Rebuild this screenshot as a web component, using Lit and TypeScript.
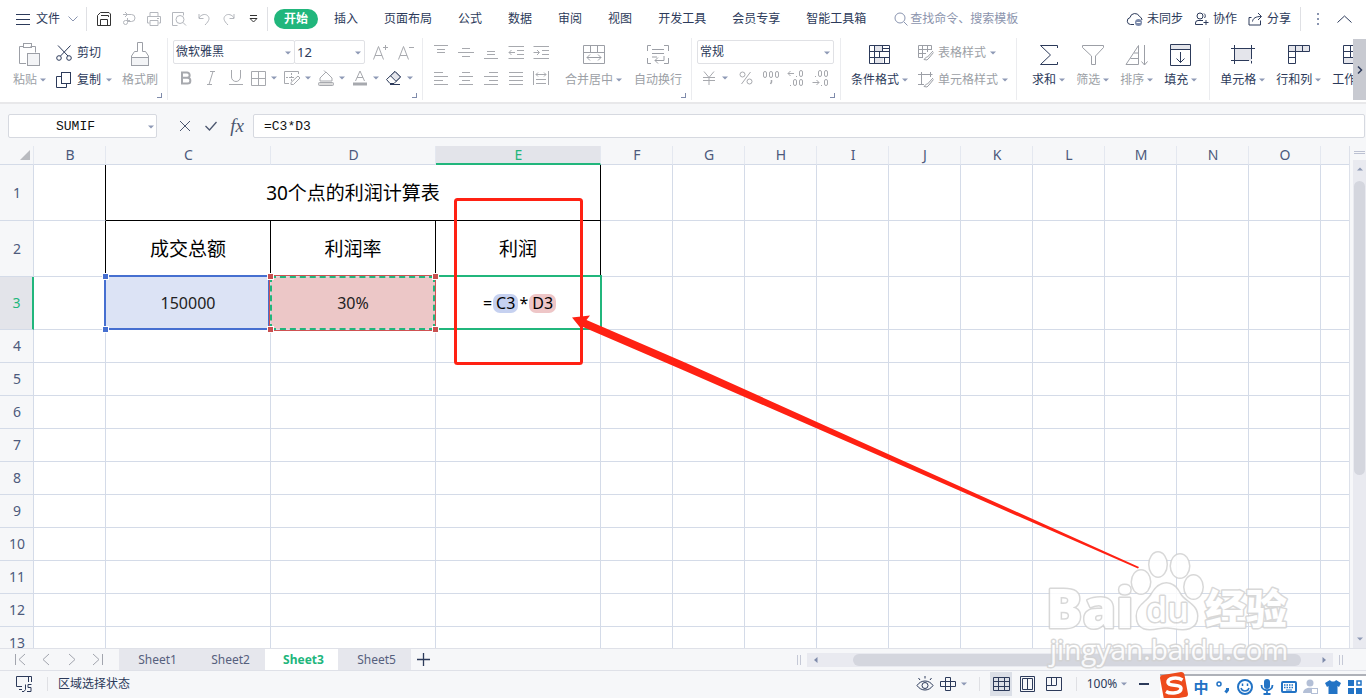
import { LitElement, html, css, svg, nothing } from "lit";
import type { TemplateResult, SVGTemplateResult } from "lit";
import { customElement } from "lit/decorators.js";
import { classMap } from "lit/directives/class-map.js";

const icon = (w: number, h: number, body: SVGTemplateResult, cls = "") =>
  html`<svg class=${"ic " + cls} width=${w} height=${h} viewBox="0 0 ${w} ${h}" aria-hidden="true">${body}</svg>`;

const caret = html`<svg class="caret" width="6" height="4" viewBox="0 0 6 4" aria-hidden="true"><path d="M0 0.5H6L3 3.5Z" /></svg>`;

/* ---- menu bar ---- */
const iMenu = icon(14, 12, svg`<path d="M0 1.5H14M0 6.5H14M0 11.5H14" />`);
const iChevron = icon(10, 6, svg`<path d="M0.5 0.5L5 5L9.5 0.5" />`, "soft");
const iSave = icon(16, 16, svg`<path d="M1.500 14.500V4.500L4.500 1.500H13L14.500 3V14.500ZM4.500 14V8.500H11.500V14M5 4.500H12.500V6" />`);
const iExport = icon(16, 16, svg`<path d="M2 3.500H10.500A3.500 3.500 0 0 1 10.500 10.500H6.500M4 1L6.500 3.500L4 6M6.500 7V11.500A2 2 0 1 1 4.500 9.500H9" />`);
const iPrint = icon(16, 16, svg`<path d="M4 5V1.500H12V5M3.500 12H1.500V5.500H14.500V12H12.500M4 9.500H12V14.500H4ZM11 7.500H13" />`);
const iPreview = icon(16, 16, svg`<path d="M6.500 14.500H1.500V1.500H12.500V4.500M12 11.500L15 14.500" /><circle cx="9" cy="8.500" r="4" />`);
const iUndo = icon(16, 16, svg`<path d="M3 3V7.500H7.500M3 7C5 3.500 9 2.500 11.500 4.500C14 7 13.500 9.500 9 14" />`);
const iRedo = icon(16, 16, svg`<path d="M13 3V7.500H8.500M13 7C11 3.500 7 2.500 4.500 4.500C2 7 2.500 9.500 7 14" />`);
const iMore = icon(9, 8, svg`<path d="M1 0.500H8M1 3.500L4.500 7L8 3.500Z" />`);
const iSearch = icon(14, 14, svg`<circle cx="6" cy="6" r="5" /><path d="M10 10L13.500 13.500" />`, "soft");
const iCloud = icon(18, 16, svg`<path d="M8 13.500H4.500A3.500 3.500 0 0 1 4 6.600A5 5 0 0 1 13.500 5.500A4 4 0 0 1 16 9" /><circle cx="12.500" cy="11.500" r="3.500" fill="#7d8bab" stroke="none" /><path d="M10.500 11.500H14.500" stroke="#fff" />`);
const iCollab = icon(16, 14, svg`<circle cx="6" cy="4" r="3" /><path d="M9 8.500H4A2.500 2.500 0 0 0 1.500 11V12.500H9M9.500 10.500H14.500M12 8V13M10 1.500A3 3 0 0 1 10.500 6" />`);
const iShare = icon(16, 14, svg`<path d="M3.500 5.500H1V13H12.500V8.500M4.500 9.500C5 6 8 4.500 13 4.500M10 1L13.500 4.500L10 8" />`);
const iDots = icon(4, 12, svg`<path d="M1 1H3M1 6H3M1 11H3" stroke-width="2" />`, "soft");
const iUp = icon(15, 8, svg`<path d="M0.500 7.500L7.500 1L14.500 7.500" />`);

/* ---- ribbon, large ---- */
const iPaste = icon(24, 24, svg`<path d="M8 20.500H1.500V3.500H5.500M12.500 3.500H17.500V9.500" /><rect x="5.500" y="0.500" width="8" height="4" /><rect x="9.500" y="10.500" width="12" height="12" fill="#f3f4f6" />`);
const iBrush = icon(20, 26, svg`<path d="M7.500 0.500H12.500V9.500H15.500L18.500 14V15.500H1.500V14L4.500 9.500H7.500Z" /><rect x="1.500" y="15.500" width="17" height="8" fill="#f3f4f6" />`);
const iMerge = icon(22, 20, svg`<path d="M0.500 0.500H21.500V18.500H0.500ZM0.500 7.500H21.500M7.500 0.500V7.500M14.500 0.500V7.500M4 12.500H18M7 9.500L4 12.500L7 15.500M15 9.500L18 12.500L15 15.500" />`);
const iWrap = icon(24, 20, svg`<path d="M5 0.500H1.500V6M18 0.500H22.500V6M1.500 13V18.500H5M22.500 13V18.500H18M6 4.500H18M6 8.500H18M6 12H11M18 11V15.500H9M12 12.500L9 15.500L12 18.500" />`);
const iCond = icon(22, 20, svg`<rect x="6" y="1" width="8" height="6" fill="#e4e5eb" stroke="none" /><rect x="6" y="13" width="8" height="6" fill="#e4e5eb" stroke="none" /><path d="M0.500 0.500H20.500V18.500H0.500ZM0.500 6.500H20.500M0.500 12.500H20.500M5.500 0.500V18.500M13.500 0.500V6.500M10.500 6.500V12.500M15.500 12.500V18.500M13.500 3.500H20.500" />`);
const iSum = icon(20, 22, svg`<path d="M18.500 4V1.500H1.500L11.500 11L1.500 20.500H18.500V18" />`);
const iFilter = icon(22, 22, svg`<path d="M0.500 1.500H21.500V3.500L13.500 12V20.500H9.500V12L0.500 3.500Z" />`);
const iSort = icon(24, 22, svg`<path d="M1 20.500L13.500 1.500V20.500ZM9 9H13.500M5.500 14.500H13.500M19.500 1V21M16.500 17.500L19.500 21L22.500 17.500" />`);
const iFill = icon(22, 22, svg`<rect x="1" y="1" width="20" height="5" fill="#e4e5eb" stroke="none" /><path d="M0.500 0.500H20.500V21.500H0.500ZM0.500 5.500H20.500M10.500 8V18.500M6.500 14.500L10.500 18.500L14.500 14.500" />`);
const iCell = icon(24, 20, svg`<rect x="4" y="4" width="17" height="12" fill="#e4e5eb" stroke="none" /><path d="M0 3.500H24M3.500 0V19M20.500 0V14M0 15.500H18M20.500 16V18.500" />`);
const iRowCol = icon(24, 20, svg`<rect x="1" y="1" width="21" height="5" fill="#e4e5eb" stroke="none" /><path d="M1.500 0.500H22.500V6.500H1.500ZM1.500 0.500V18.500H8.500V0.500M15.500 0.500V6.500M1.500 12.500H8.500" />`);
const iSheet = icon(24, 20, svg`<rect x="1" y="13" width="20" height="5" fill="#e4e5eb" stroke="none" /><path d="M0.500 0.500H22.500V18.500H0.500ZM0.500 6.500H22.500M0.500 12.500H22.500M7.500 0.500V12.500" />`);

/* ---- ribbon, small ---- */
const iCut = icon(16, 16, svg`<path d="M2 0.500L12 11M14.500 0.500L4.500 11" /><circle cx="3" cy="13" r="2.300" /><circle cx="13" cy="13" r="2.300" />`);
const iCopy = icon(16, 16, svg`<path d="M5 4.500H0.500V15.500H10.500V12" /><rect x="5.500" y="0.500" width="9" height="11" />`);
const iBold = icon(14, 14, svg`<path d="M3 1.500H8A2.500 2.500 0 0 1 8 6.800H3ZM3 6.800H8.500A2.800 2.800 0 0 1 8.500 12.500H3Z" stroke-width="2" />`);
const iItalic = icon(12, 14, svg`<path d="M5 0.500H10M2 13.500H7M8 0.500L4 13.500" />`);
const iUnder = icon(16, 16, svg`<path d="M3.500 0V7A4.500 4.500 0 0 0 12.500 7V0M1 14.500H15" />`);
const iGrid = icon(16, 16, svg`<path d="M1.500 1.500H15.500V15.500H1.500ZM8.500 1.500V15.500M1.500 8.500H15.500" />`);
const iDraw = icon(18, 16, svg`<path d="M6 13.500H1.500V1.500H15.500V4" /><path d="M3 7.500H12M8.500 3V12" stroke-dasharray="2 1" /><path d="M15 6L17 8L10.500 14.500H8V12.500Z" />`);
const iBucket = icon(18, 16, svg`<path d="M3 8L9 2L15 8V11H3ZM7 0.500L9 2.500" /><rect x="1.500" y="12.500" width="15" height="3" rx="1" fill="#dcdcdc" />`);
const iFontColor = icon(16, 16, svg`<path d="M3.500 11L8 1L12.500 11M5 7.500H11" /><path d="M1 14H15" stroke-width="3" />`);
const iEraser = icon(18, 16, svg`<path d="M1.500 9.500L5 13.500H9L15.500 7L10 1.500Z" /><path d="M5.500 5.800L11 11.300L15.500 7L10 1.500Z" fill="#e4e5eb" /><path d="M5 14.500H15" />`);
const iGrow = icon(18, 16, svg`<path d="M1.500 15.500L6.500 2.500L11.500 15.500M3 11.500H10M11 3.500H16M13.500 1V6" />`);
const iShrink = icon(18, 16, svg`<path d="M1.500 15.500L6.500 2.500L11.500 15.500M3 11.500H10M12 3.500H17" />`);
const lines = (d: string) => icon(16, 16, svg`<path d=${d} />`);
const alignIcons: [string, TemplateResult][] = [
  ["顶端对齐", lines("M1 1.500H15M4 5.500H12M4 8.500H12")],
  ["垂直居中", lines("M4 4.500H12M0 8.500H16M4 12.500H12")],
  ["底端对齐", lines("M4 7.500H12M4 10.500H12M1 14.500H15")],
  ["减少缩进", lines("M0.500 2.500H16M9 6.500H16M9 10.500H16M0.500 14.500H16M1 8.500H7M3.500 6L1 8.500L3.500 11")],
  ["增加缩进", lines("M0.500 2.500H16M9 6.500H16M9 10.500H16M0.500 14.500H16M0.500 8.500H6M4 6L6.500 8.500L4 11")],
  ["左对齐", lines("M1 2.500H10M1 6.500H15M1 10.500H10M1 14.500H15")],
  ["居中", lines("M4 2.500H12M1 6.500H15M4 10.500H12M1 14.500H15")],
  ["右对齐", lines("M6 2.500H15M1 6.500H15M6 10.500H15M1 14.500H15")],
  ["两端对齐", lines("M1 2.500H15M1 6.500H15M1 10.500H15M1 14.500H15")],
  ["分散对齐", lines("M0.500 1V15M15.500 1V15M3 4.500H13M5 2.500L3 4.500L5 6.500M11 2.500L13 4.500L11 6.500M3 9.500H13M3 13.500H13")],
];
const iYen = icon(14, 14, svg`<path d="M2 0.500L7 6.500L12 0.500M1 6.500H13M1 9.500H13M7 6.500V14" />`);
const iPercent = icon(14, 14, svg`<circle cx="3.500" cy="3.500" r="2.500" /><circle cx="10.500" cy="10.500" r="2.500" /><path d="M11.500 1L2.500 13" />`);
const oval = (x: number, y: number) => svg`<rect x=${x} y=${y} width="3" height="6" rx="1.500" />`;
const iThousand = icon(18, 16, svg`${oval(1.5, 1.5)}${oval(7.5, 1.5)}${oval(13.5, 1.5)}<path d="M9.500 10V12L8.500 14" stroke-width="1.500" />`);
const iDecInc = icon(18, 16, svg`${oval(12.5, 0.5)}${oval(6.5, 9.5)}${oval(12.5, 9.5)}<path d="M1 3.500H7M3.500 1L1 3.500L3.500 6M9 6.500H10M3 15.500H4" />`);
const iDecDec = icon(18, 16, svg`${oval(6.5, 0.5)}${oval(12.5, 0.5)}${oval(12.5, 9.5)}<path d="M0.500 12.500H7M4.500 10L7 12.500L4.500 15M3 6.500H4M9 15.500H10" />`);
const iTblStyle = icon(16, 16, svg`<path d="M5 12.500H0.500V0.500H13.500V5M0.500 4.500H13M0.500 8.500H8M4.500 0.500V12.500M9.500 0.500V7M15 6L9 12.500M9 11.500L6 14.500L9 15L11 13L15.500 7.500" />`);
const iCellStyle = icon(16, 16, svg`<path d="M0 2.500H14.500M3.500 0V13M12.500 0V5M0 12.500H6M15 6L9 12.500M9 11.500L6 14.500L9 15L11 13L15.500 7.500" />`);

const big = (ic: TemplateResult, label: string, opt: { dim?: boolean; plain?: boolean } = {}) =>
  html`<button class=${classMap({ big: true, dim: !!opt.dim })}>
    <span class="bigicon">${ic}</span><span class="lab">${label}${opt.plain ? nothing : caret}</span>
  </button>`;
const small = (label: string, ic: TemplateResult, drop = false) =>
  html`<button class=${classMap({ tool: true, drop })} aria-label=${label}><span class="slot">${ic}</span>${drop ? caret : nothing}</button>`;
const launcher = html`<button class="launcher" aria-label="更多设置"></button>`;

const LETTERS = "BCDEFGHIJKLMNOPQRSTUVWXYZ".split("");
const WIDE = ["C", "D", "E"];

@customElement("app-root")
export class AppRoot extends LitElement {
  static styles = css`
    :host {
      display: flex;
      flex-direction: column;
      position: relative;
      height: 100vh;
      overflow: hidden;
      background: #f6f7f9;
      color: #2c3a5a;
      font: 12px/16px "Noto Sans", "Noto Sans CJK SC", sans-serif;
      --line: #d4dbe8;
      --green: #21b67c;
    }
    * { box-sizing: border-box; }
    button, input, select {
      font: inherit;
      color: inherit;
      background: none;
      border: 0;
      padding: 0;
      margin: 0;
      outline: 0;
      appearance: none;
    }
    button { white-space: nowrap; flex: none; }
    .ic { display: block; flex: none; fill: none; stroke: currentColor; stroke-width: 1; }
    .soft { color: #8a95b0; }
    .caret { display: block; flex: none; fill: #8e99b5; }
    .rule { width: 1px; flex: none; background: #dfe0e4; }

    .menubar { display: flex; align-items: center; height: 38px; background: #fff; flex: none; }
    .menubar .rule { height: 24px; }
    .file { display: flex; align-items: center; gap: 6px; padding: 0 8px 0 16px; }
    .file .soft { margin-left: 2px; }
    .quick { display: flex; padding: 0 1px 0 4px; color: #b4b7bd; }
    .quick button { width: 25px; height: 24px; display: grid; place-items: center; }
    .quick .on { color: #333; }
    .tabs { display: flex; align-items: center; padding-left: 6px; }
    .tabs button { padding: 0 13px; height: 20px; }
    .tabs .active { padding: 0 10px; margin-right: 3px; border-radius: 10px; background: var(--green); color: #fff; font-weight: 700; }
    .search { display: flex; align-items: center; gap: 2px; margin-left: 15px; flex: 0 1 160px; min-width: 0; }
    .search input { width: 100%; }
    .search input::placeholder { color: #8c94ad; opacity: 1; }
    .account { display: flex; align-items: center; margin-left: auto; gap: 11px; padding-right: 14px; }
    .account button { display: flex; align-items: center; gap: 3px; }
    .account .rule { margin: 0 4px 0 -2px; }
    .account .up { margin-left: 6px; }

    .ribbon { display: flex; height: 66px; background: #fff; border-bottom: 2px solid #e8e8ea; flex: none; }
    .groups { display: flex; flex: 1; min-width: 0; overflow: hidden; height: 62px; }
    .group { display: flex; flex: none; position: relative; border-right: 1px solid #ebecef; padding-top: 1px; }
    .group:last-child { border-right: 0; }
    .big { display: flex; flex-direction: column; align-items: center; height: 52px; padding: 0; }
    .bigicon { height: 32px; display: grid; place-items: center; }
    .lab { display: flex; align-items: center; gap: 3px; height: 16px; margin-top: 1px; }
    .dim { color: #9c9fa6; }
    .stack { display: flex; flex-direction: column; align-items: flex-start; }
    .row { display: flex; height: 26px; align-items: center; }
    .tool { width: 25px; height: 24px; display: flex; align-items: center; justify-content: center; color: #a7a9ae; }
    .tool.drop { width: 34px; justify-content: flex-start; gap: 3px; }
    .slot { width: 20px; display: grid; place-items: center; flex: none; }
    .tool.dark { color: #2c3a5a; }
    .line { display: flex; align-items: center; gap: 4px; height: 27px; }
    .launcher { position: absolute; right: 5px; bottom: 2px; width: 5px; height: 5px; border: solid #7f8bab; border-width: 0 1px 1px 0; }
    .pick { position: relative; display: block; height: 24px; border: 1px solid #e0e1e5; border-radius: 2px; }
    .pick + .pick { margin-left: -1px; }
    .pick select { width: 100%; height: 22px; padding-left: 2px; display: block; font-size: 12px; }
    .pick .caret { position: absolute; right: 3px; top: 10px; }
    .pick.size select { font-size: 13px; }
    .g-clip { padding-left: 13px; padding-right: 9px; gap: 10px; }
    .g-clip .line { gap: 5px; }
    .g-font { padding-left: 5px; width: 255px; }
    .w-font { width: 122px; }
    .w-size { width: 71px; margin-right: 3px; }
    .g-align { padding-left: 5px; padding-right: 9px; }
    .g-align .stack { margin-right: 12px; }
    .g-align .big + .big { margin-left: 12px; }
    .g-num { padding: 1px 6px 0 5px; }
    .g-num .row + .row { padding-left: 2px; }
    .w-num { width: 137px; }
    .g-style { padding-left: 10px; padding-right: 8px; gap: 10px; }
    .g-calc { padding-left: 15px; padding-right: 12px; gap: 11px; }
    .g-cells { padding-left: 10px; gap: 11px; }
    .ribbon-next { width: 13px; height: 61px; margin-top: 1px; background: #c8cad1; display: grid; place-items: center; }

    .formula { display: flex; align-items: center; height: 42px; padding: 2px 1px 0 8px; flex: none; }
    .namebox { position: relative; width: 149px; flex: none; }
    .namebox .caret { position: absolute; right: 3px; top: 11px; }
    .box { display: block; width: 100%; height: 24px; border: 1px solid #d6d9e0; border-radius: 2px; background: #fff; color: #111; font: 13px/22px "Liberation Mono", monospace; }
    .namebox .box { padding-right: 14px; text-align: center; }
    .formula label.fx { flex: 1; min-width: 0; }
    .fx .box { padding-left: 10px; }
    .fxtools { display: flex; padding: 0 3px 0 15px; color: #4b566f; }
    .fxtools button { width: 26px; height: 24px; display: grid; place-items: center; }
    .fxtools .fn { font: italic 19px/24px "Liberation Serif", serif; }

    .work { display: flex; flex: 1; min-height: 0; }
    .sheet { flex: 1; min-width: 0; overflow: hidden; border-right: 1px solid #dde1ea; background: #fff; }
    table { table-layout: fixed; border-collapse: separate; border-spacing: 0; width: 1px; }
    .c-head { width: 34px; }
    .c-std { width: 72px; }
    .c-wide { width: 165px; }
    th, td { padding: 0; border: solid var(--line); border-width: 0 1px 1px 0; font-weight: 400; position: relative; }
    th { background: #f6f7f9; color: #4d5a7c; font-size: 14px; line-height: 16px; padding-left: 1px; }
    thead th { height: 19px; border-right-color: #e4e8f0; }
    tbody th { height: 33px; }
    thead .cur { background: #e3e4ea; color: var(--green); border-bottom: 2px solid var(--green); }
    tbody .cur { background: #e3e4ea; color: var(--green); border-right: 2px solid var(--green); }
    .corner svg { display: block; margin-left: auto; margin-right: 3px; fill: #b9bbc0; }
    .tall th { height: 56px; }
    .tall.edit th { height: 53px; }
    .br { border-right-color: #000; }
    .bb { border-bottom-color: #000; }
    td { text-align: center; color: #000; font-size: 16px; line-height: 22px; }
    .title { font-size: 19px; line-height: 28px; }
    .blue { background: #dce3f5; }
    .red { background: #ecc7c7; }
    .red, .blue { color: #222; }
    .sel { position: absolute; inset: -2px; pointer-events: none; z-index: 1; }
    .blue .sel { border: 2px solid #466fd0; right: 0; bottom: -1px; }
    .red .sel { border: 1px solid #cf5252; inset: -2px -1px -2px -2px; z-index: 2; }
    .red .sel i { display: block; height: 100%; border: 2px dashed var(--green); background: none; }
    .active .sel { border: 2px solid var(--green); inset: -2px -2px -1px 1px; border-left: 0; }
    .knob { position: absolute; width: 5px; height: 5px; background: #466fd0; z-index: 3; box-shadow: 0 0 0 1px #fff; }
    .tl { left: -3px; top: -3px; }
    .bl { left: -3px; bottom: -3px; }
    .tr { right: -3px; top: -3px; }
    .brc { right: -3px; bottom: -3px; }
    .red .knob { background: #c85050; }
    .expr { display: flex; justify-content: center; align-items: center; gap: 1px; line-height: 19px; padding-left: 3px; }
    .chip { padding: 0 3px; border-radius: 7px; background: #c6d1f0; }
    .chip.pink { background: #eec6c7; }

    .vbar { width: 16px; flex: none; display: flex; flex-direction: column; padding-left: 3px; }
    .split { height: 14px; padding: 5px 1px 0; }
    .split i { display: block; height: 3px; border: solid #bcc1d2; border-width: 1px 0; }
    .vtrack { flex: 1; display: flex; flex-direction: column; background: #e9eaf0; padding: 7px 1px; align-items: center; }
    .flip { transform: rotate(180deg); }
    .vthumb { width: 11px; flex: 0 0 62%; margin: 10px 0 auto; border-radius: 6px; background: #d4d6de; }

    .sheets { display: flex; height: 23px; border: solid #dfe1e8; border-width: 1px 0; flex: none; align-items: stretch; }
    .nav { display: flex; align-items: center; width: 119px; padding-left: 7px; color: #a2a5ae; }
    .nav button { width: 26px; height: 20px; display: grid; place-items: center; }
    .tab { width: 73px; padding-left: 4px; text-align: center; background: #e6e7ed; color: #56607d; }
    .tab.on { background: #fff; color: var(--green); font-weight: 700; }
    .add { width: 24px; display: grid; place-items: center; }
    .hbar { display: flex; align-items: center; margin-left: auto; width: 546px; margin-right: 23px; gap: 6px; min-width: 0; }
    .grip { width: 4px; height: 10px; flex: none; border: solid #c5c9d6; border-width: 0 1px; }
    .htrack { flex: 1; height: 14px; display: flex; align-items: center; background: #e9eaf0; padding: 0 6px; }
    .hthumb { flex: 0 0 448px; height: 12px; border-radius: 6px; background: #d4d6de; margin-left: 35px; margin-right: auto; }
    .tri { fill: #7f8bab; display: block; flex: none; }

    .status { display: flex; align-items: center; height: 27px; flex: none; padding-bottom: 1px; }
    .status .rule { height: 14px; }
    .js { padding: 0 14px 0 16px; }
    .state { padding-left: 10px; }
    .views { display: flex; align-items: center; margin-left: auto; width: 454px; }
    .views button { width: 26px; height: 24px; display: flex; align-items: center; justify-content: center; }
    .views .picked { width: 22px; margin: 0 3px 0 10px; background: #dbdfe7; }
    .views .wide { width: 32px; justify-content: flex-start; gap: 5px; margin-right: 9px; padding-left: 2px; }
    .views .zoom { width: 44px; gap: 4px; margin: 0 2px 0 8px; }
    .views .last { margin-right: 9px; }

    .ime { position: absolute; right: 0; bottom: 0; display: flex; height: 24px; align-items: center; padding-left: 30px; background: #fff; border-top: 2px solid #aeb1b8; color: #2273c5; width: 206px; }
    .ime button { width: 22px; height: 22px; display: grid; place-items: center; font: 700 15px/20px "Noto Sans CJK SC", sans-serif; }
    .ime .pale { color: #b3bfd6; }
    .sogou { position: absolute; left: 0; bottom: -2px; }
    .notes { position: absolute; left: 0; top: 0; pointer-events: none; z-index: 5; }
    .mark { position: absolute; right: 70px; bottom: 24px; z-index: 6; pointer-events: none; }
    .wm { fill: #fff; stroke: #d2d2d2; stroke-width: 3; stroke-linejoin: round; paint-order: stroke; opacity: 0.85; }
    .wm-big { font: 800 54px "Open Sans", sans-serif; }
    .wm-du { font: 600 34px "Open Sans", sans-serif; }
    .wm-cn { font: 900 41px "Noto Sans CJK SC", sans-serif; }
    .wm-url { font: 400 28px "Open Sans", sans-serif; }
  `;

  private onResize = () => this.requestUpdate();

  connectedCallback() {
    super.connectedCallback();
    window.addEventListener("resize", this.onResize);
  }

  disconnectedCallback() {
    window.removeEventListener("resize", this.onResize);
    super.disconnectedCallback();
  }

  private menubar() {
    const quick: [string, TemplateResult, boolean][] = [
      ["保存", iSave, true], ["输出", iExport, false], ["打印", iPrint, false], ["打印预览", iPreview, false],
      ["撤销", iUndo, false], ["恢复", iRedo, false], ["更多", iMore, true],
    ];
    const tabs = ["插入", "页面布局", "公式", "数据", "审阅", "视图", "开发工具", "会员专享", "智能工具箱"];
    return html`<header class="menubar">
      <button class="file">${iMenu}<span>文件</span>${iChevron}</button>
      <i class="rule"></i>
      <div class="quick">${quick.map(([l, ic, on]) => html`<button class=${on ? "on" : ""} aria-label=${l}>${ic}</button>`)}</div>
      <i class="rule"></i>
      <nav class="tabs"><button class="active">开始</button>${tabs.map((t) => html`<button>${t}</button>`)}</nav>
      <label class="search">${iSearch}<input type="text" aria-label="查找命令" placeholder="查找命令、搜索模板" /></label>
      <div class="account">
        <button>${iCloud}未同步</button><button>${iCollab}协作</button><button>${iShare}分享</button>
        <i class="rule"></i><button aria-label="选项">${iDots}</button><button class="up" aria-label="收起功能区">${iUp}</button>
      </div>
    </header>`;
  }

  private ribbon() {
    return html`<section class="ribbon">
      <div class="groups">
        <div class="group g-clip">
          ${big(iPaste, "粘贴", { dim: true })}
          <div class="stack">
            <button class="line">${iCut}<span>剪切</span></button>
            <button class="line">${iCopy}<span>复制</span>${caret}</button>
          </div>
          ${big(iBrush, "格式刷", { dim: true, plain: true })}${launcher}
        </div>
        <div class="group g-font">
          <div class="stack">
            <div class="row">
              <span class="pick w-font"><select aria-label="字体"><option>微软雅黑</option></select>${caret}</span>
              <span class="pick size w-size"><select aria-label="字号"><option>12</option></select>${caret}</span>
              ${small("增大字号", iGrow)}${small("减小字号", iShrink)}
            </div>
            <div class="row">
              ${small("加粗", iBold)}${small("倾斜", iItalic)}${small("下划线", iUnder)}
              ${small("边框", iGrid, true)}${small("绘制边框", iDraw, true)}${small("填充颜色", iBucket, true)}${small("字体颜色", iFontColor, true)}
              <button class="tool drop dark" aria-label="清除"><span class="slot">${iEraser}</span>${caret}</button>
            </div>
          </div>${launcher}
        </div>
        <div class="group g-align">
          <div class="stack">
            <div class="row">${alignIcons.slice(0, 5).map(([l, i]) => small(l, i))}</div>
            <div class="row">${alignIcons.slice(5).map(([l, i]) => small(l, i))}</div>
          </div>
          ${big(iMerge, "合并居中", { dim: true })}${big(iWrap, "自动换行", { dim: true, plain: true })}${launcher}
        </div>
        <div class="group g-num">
          <div class="stack">
            <div class="row"><span class="pick w-num"><select aria-label="数字格式"><option>常规</option></select>${caret}</span></div>
            <div class="row">${small("货币", iYen, true)}${small("百分比", iPercent)}${small("千位分隔", iThousand)}${small("增加小数位", iDecInc)}${small("减少小数位", iDecDec)}</div>
          </div>${launcher}
        </div>
        <div class="group g-style">
          ${big(iCond, "条件格式")}
          <div class="stack">
            <button class="line dim">${iTblStyle}<span>表格样式</span>${caret}</button>
            <button class="line dim">${iCellStyle}<span>单元格样式</span>${caret}</button>
          </div>
        </div>
        <div class="group g-calc">${big(iSum, "求和")}${big(iFilter, "筛选", { dim: true })}${big(iSort, "排序", { dim: true })}${big(iFill, "填充")}</div>
        <div class="group g-cells">${big(iCell, "单元格")}${big(iRowCol, "行和列")}${big(iSheet, "工作表")}</div>
      </div>
      <button class="ribbon-next" aria-label="向右滚动">${icon(6, 8, svg`<path d="M1 0.500L4.500 4L1 7.500" stroke-width="1.500" />`)}</button>
    </section>`;
  }

  private formula() {
    return html`<section class="formula">
      <span class="namebox"><input class="box" aria-label="名称框" .value=${"SUMIF"} />${caret}</span>
      <div class="fxtools">
        <button aria-label="取消">${icon(12, 12, svg`<path d="M1 1L11 11M11 1L1 11" />`)}</button>
        <button aria-label="输入">${icon(12, 10, svg`<path d="M0.500 5L4.500 9L11.500 1" stroke-width="1.300" />`)}</button>
        <button class="fn" aria-label="插入函数">fx</button>
      </div>
      <label class="fx"><input class="box" aria-label="编辑栏" .value=${"=C3*D3"} /></label>
    </section>`;
  }

  private grid() {
    // Only as many columns and rows as the window has room for.
    const extra = Math.ceil((window.innerWidth - 17 - 601) / 72);
    const cols = LETTERS.slice(0, Math.min(LETTERS.length, Math.max(4, 4 + extra)));
    const rowCount = Math.max(1, Math.ceil((window.innerHeight - 50 - 330) / 33));
    const rest = Array.from({ length: rowCount }, (_, i) => i + 4);
    const blanks = (from: string) => cols.slice(cols.indexOf(from)).map(() => html`<td></td>`);
    const tail = cols.slice(4).map(() => html`<td></td>`);
    return html`<div class="sheet"><table>
      <colgroup><col class="c-head" />${cols.map((c) => html`<col class=${WIDE.includes(c) ? "c-wide" : "c-std"} />`)}</colgroup>
      <thead><tr>
        <th class="corner" aria-label="全选"><svg width="10" height="10" viewBox="0 0 10 10"><path d="M10 0V10H0Z" /></svg></th>
        ${cols.map((c) => html`<th scope="col" class=${c === "E" ? "cur" : ""}>${c}</th>`)}
      </tr></thead>
      <tbody>
        <tr class="tall"><th scope="row">1</th><td class="br"></td><td class="title br bb" colspan="3">30个点的利润计算表</td>${tail}</tr>
        <tr class="tall"><th scope="row">2</th><td class="br"></td><td class="title br">成交总额</td><td class="title br">利润率</td><td class="title br">利润</td>${tail}</tr>
        <tr class="tall edit"><th scope="row" class="cur">3</th><td></td>
          <td class="blue">150000<i class="sel"></i><i class="knob tl"></i><i class="knob bl"></i></td>
          <td class="red">30%<span class="sel"><i></i></span><i class="knob tl"></i><i class="knob bl"></i><i class="knob tr"></i><i class="knob brc"></i></td>
          <td class="active"><div class="expr">=<span class="chip">C3</span>*<span class="chip pink">D3</span></div><i class="sel"></i></td>${tail}</tr>
        ${rest.map((n) => html`<tr><th scope="row">${n}</th>${blanks("B")}</tr>`)}
      </tbody>
    </table></div>`;
  }

  private sheets() {
    const nav: [string, string][] = [
      ["第一张", "M1.500 1V12M11 1L5 6.500L11 12"], ["上一张", "M9 1L3 6.500L9 12"],
      ["下一张", "M3 1L9 6.500L3 12"], ["最后一张", "M10.500 1V12M1 1L7 6.500L1 12"],
    ];
    return html`<section class="sheets">
      <div class="nav">${nav.map(([l, d]) => html`<button aria-label=${l}>${icon(12, 13, svg`<path d=${d} />`)}</button>`)}</div>
      ${["Sheet1", "Sheet2", "Sheet3", "Sheet5"].map((s) => html`<button class=${classMap({ tab: true, on: s === "Sheet3" })}>${s}</button>`)}
      <button class="add" aria-label="新建工作表">${icon(13, 13, svg`<path d="M6.500 0V13M0 6.500H13" stroke-width="1.300" />`)}</button>
      <div class="hbar"><i class="grip"></i>
        <div class="htrack"><svg class="tri" width="5" height="6"><path d="M4.500 0V6L1 3Z" /></svg><i class="hthumb"></i><svg class="tri" width="5" height="6"><path d="M0.500 0V6L4 3Z" /></svg></div>
        <i class="grip"></i></div>
    </section>`;
  }

  private status() {
    return html`<footer class="status">
      <button class="js" aria-label="宏">${icon(17, 17, svg`<path d="M6 10.500H0.500V0.500H15.500V6M12.500 0.500V6M3 13.500H6M9.500 8.500V13.500L8 15.500H6M15.500 8.500H12V11.500H15V15.500H11" />`)}</button>
      <i class="rule"></i><span class="state">区域选择状态</span>
      <div class="views">
        <button aria-label="护眼模式">${icon(18, 16, svg`<path d="M1 9.500C5 3.500 13 3.500 17 9.500C13 15.500 5 15.500 1 9.500ZM9 0V2.500M2.500 2L4 4M15.500 2L14 4" /><circle cx="9" cy="9.500" r="3" />`)}</button>
        <button class="wide" aria-label="阅读模式">${icon(16, 14, svg`<path d="M5.500 0.500H10.500V13.500H5.500ZM0.500 4.500H15.500V9.500H0.500Z" />`)}${caret}</button>
        <i class="rule"></i>
        <button class="picked" aria-label="普通视图">${icon(17, 14, svg`<path d="M0.500 0.500H16.500V13.500H0.500ZM0.500 4.500H16.500M0.500 9.500H16.500M5.500 0.500V13.500M11.500 0.500V13.500" />`)}</button>
        <button aria-label="分页预览">${icon(16, 16, svg`<path d="M0.500 0.500H14.500V15.500H0.500ZM2.500 2.500H12.500V13.500H2.500ZM7.500 2.500V13.500" />`)}</button>
        <button class="last" aria-label="页面布局">${icon(16, 14, svg`<path d="M0.500 0.500H15.500V13.500H0.500ZM5.500 0.500V8M10.500 0.500V8M0.500 8.500H10.500" />`)}</button>
        <i class="rule"></i>
        <button class="zoom">100%${caret}</button>
        <button aria-label="缩小">${icon(10, 2, svg`<path d="M0 1H10" stroke-width="2" />`)}</button>
      </div>
    </footer>`;
  }

  private ime() {
    return html`<aside class="ime">
      <svg class="sogou" width="30" height="28" viewBox="0 0 30 28"><path d="M0 6Q0 3 3 3L21 0Q24 0 24.500 3L28 22Q28 25 25 25L7 28Q4 28 3.500 25Z" fill="#ee4b1c" /><path d="M22.500 8C17 4.500 7.500 6 8 10.500C8.500 15 21 11.500 21 16.500C21 21 11 22.500 6 19.500" fill="none" stroke="#fff" stroke-width="3.500" /></svg>
      <button>中</button>
      <button aria-label="标点">${icon(16, 14, svg`<circle cx="4" cy="4" r="2" stroke-width="1.500" /><path d="M12.500 8V10L10.500 12.500" stroke-width="3" />`)}</button>
      <button aria-label="表情">${icon(18, 18, svg`<circle cx="9" cy="9" r="7" stroke-width="2" /><path d="M6.500 5.500V8M11.500 5.500V8M5 10C6 14 12 14 13 10" stroke-width="1.500" />`)}</button>
      <button aria-label="语音">${icon(14, 16, svg`<rect x="4" y="0" width="6" height="10" rx="3" fill="currentColor" stroke="none" /><path d="M1.500 6C1.500 13 12.500 13 12.500 6M7 11V15M3.500 15H10.500" stroke-width="1.800" />`)}</button>
      <button aria-label="软键盘">${icon(16, 12, svg`<rect x="1" y="1" width="14" height="10" rx="1" stroke-width="2" /><path d="M3 4H13M3 6.500H13" stroke-dasharray="1.500 1" stroke-width="1.500" /><path d="M5 9H11" />`)}</button>
      <button class="pale" aria-label="账号">${icon(16, 16, svg`<circle cx="7" cy="4" r="3.500" fill="currentColor" stroke="none" /><path d="M0 14C0 7 14 7 14 14Z" fill="currentColor" stroke="none" /><rect x="8.500" y="9.500" width="6" height="5" fill="#fff" />`)}</button>
      <button aria-label="皮肤">${icon(16, 14, svg`<path d="M5 0C6 2 10 2 11 0L16 3L14 7L12.500 6V14H3.500V6L2 7L0 3Z" fill="currentColor" stroke="none" />`)}</button>
      <button aria-label="工具箱">${icon(14, 14, svg`<path d="M0 0H6V6H0ZM0 8H6V14H0ZM8 8H14V14H8Z" fill="currentColor" stroke="none" /><rect x="9" y="1" width="4" height="4" stroke-width="1.500" />`)}</button>
    </aside>`;
  }

  render() {
    return html`
      ${this.menubar()}${this.ribbon()}${this.formula()}
      <main class="work">${this.grid()}
        <div class="vbar"><div class="split"><i></i></div>
          <div class="vtrack"><svg class="caret flip" width="6" height="4" viewBox="0 0 6 4"><path d="M0 0.500H6L3 3.500Z" /></svg><i class="vthumb"></i>${caret}</div></div>
      </main>
      ${this.sheets()}${this.status()}${this.ime()}
      <svg class="notes" width="1200" height="600" viewBox="0 0 1200 600" aria-hidden="true">
        <rect x="455.500" y="199.500" width="126" height="164" rx="2" fill="none" stroke="#ff2113" stroke-width="3" />
        <path d="M572 317.500L590 315.500L586.500 320L685 362.500L1139 567L1138 568.500L684 370.500L583 327L583 331Z" fill="#ff2113" />
      </svg>
      <svg class="mark" width="250" height="130" viewBox="0 0 250 130" aria-hidden="true">
        <g class="wm">
          <text class="wm-url" x="4" y="116">jingyan.baidu.com</text>
          <text class="wm-big" x="0" y="84">Bai</text>
          <path d="M106 50C114 36 127 36 134 50C138 58 151 60 151 72C151 86 138 86 128 84C122 83 118 83 112 84C102 86 91 86 91 72C91 61 102 58 106 50Z" />
          <ellipse cx="95" cy="38" rx="9" ry="11.500" /><ellipse cx="112" cy="20.500" rx="8.500" ry="12" /><ellipse cx="134" cy="22" rx="9" ry="11.500" /><ellipse cx="147.500" cy="43" rx="9" ry="11.500" />
          <text class="wm-du" x="100" y="78">du</text>
          <text class="wm-cn" x="159" y="80">经验</text>
        </g>
      </svg>`;
  }
}
